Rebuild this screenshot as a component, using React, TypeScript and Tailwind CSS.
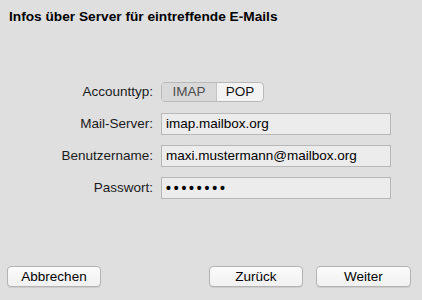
const rows = [
  { label: 'Mail-Server:', value: 'imap.mailbox.org' },
  { label: 'Benutzername:', value: 'maxi.mustermann@mailbox.org' },
  { label: 'Passwort:', value: '••••••••', secret: true },
];

function Button({ children, className = '' }: { children: React.ReactNode; className?: string }) {
  return (
    <button
      className={`h-[21px] rounded-[4px] border border-[#b3b3b3] bg-gradient-to-b from-[#fbfbfb] to-[#f1f1f1] text-[13.5px] leading-none text-black shadow-[0_1px_0_rgba(0,0,0,0.08)] ${className}`}
    >
      {children}
    </button>
  );
}

export default function App() {
  return (
    <div
      className="flex h-[300px] w-[422px] flex-col bg-[#dfdfdf] text-[13.5px] text-black"
      style={{ fontFamily: '"Liberation Sans", Arial, sans-serif' }}
    >
      <h1 className="px-[9px] pt-[9px] text-[13.7px] font-bold leading-[16px]">
        Infos über Server für eintreffende E-Mails
      </h1>

      {/* form */}
      <div className="mt-[56px] grid grid-cols-[153px_230px] items-center gap-x-[8px] gap-y-[10px]">
        <span className="flex h-[22px] items-center justify-end text-[#1a1a1a]">Accounttyp:</span>
        <div className="flex h-[20px] w-[103px] overflow-hidden rounded-[4px] border border-[#b9b9b9] bg-[#f3f3f3]">
          <span className="flex w-[55px] items-center justify-center border-r border-[#c4c4c4] bg-[#d9d9d9] text-[#4d4d4d]">
            IMAP
          </span>
          <span className="flex flex-1 items-center justify-center text-[#111]">POP</span>
        </div>

        {rows.map((r) => (
          <>
            <span key={r.label + 'l'} className="flex h-[22px] items-center justify-end text-[#1a1a1a]">
              {r.label}
            </span>
            <div
              key={r.label + 'v'}
              className="flex h-[22px] items-center border border-[#b8b8b8] bg-[#ececec] pl-[4px]"
            >
              {r.secret ? (
                <span className="text-[14px] font-bold tracking-[2.8px]">{r.value}</span>
              ) : (
                r.value
              )}
            </div>
          </>
        ))}
      </div>

      <div className="mt-auto flex items-center px-[7px] pb-[13px] pr-[11px]">
        <Button className="w-[94px]">Abbrechen</Button>
        <div className="flex-1" />
        <Button className="w-[94px]">Zurück</Button>
        <Button className="ml-[13px] w-[95px]">Weiter</Button>
      </div>
    </div>
  );
}
